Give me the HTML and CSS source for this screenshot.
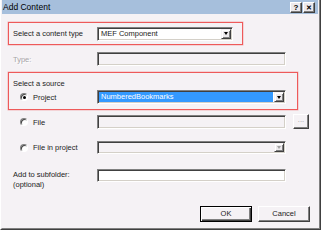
FILE: index.html
```html
<!DOCTYPE html>
<html>
<head>
<meta charset="utf-8">
<link rel="stylesheet" href="styles.css">
</head>
<body>
<div class="dialog">
  <div class="frame">
    <div class="titlebar">
      <span class="title">Add Content</span>
      <div class="tbtns">
        <span class="tbtn">?</span>
        <span class="tbtn x">&#x2715;</span>
      </div>
    </div>
    <div class="content">
      <div class="redbox box1">
        <div class="row">
          <span class="label">Select a content type</span>
          <div class="combo w136">
            <span class="ctext">MEF Component</span>
            <span class="dd"><span class="tri"></span></span>
          </div>
        </div>
      </div>

      <div class="row plain type-row">
        <span class="label disabled">Type:</span>
        <div class="field disabled w189"></div>
      </div>

      <div class="redbox box2">
        <div class="srclabel">Select a source</div>
        <div class="row proj-row">
          <span class="radio-wrap"><span class="radio on"></span><span>Project</span></span>
          <div class="combo w189">
            <span class="ctext sel">NumberedBookmarks</span>
            <span class="dd"><span class="tri"></span></span>
          </div>
        </div>
      </div>

      <div class="row plain file-row">
        <span class="radio-wrap"><span class="radio"></span><span>File</span></span>
        <div class="field disabled w189"></div>
        <span class="browse">...</span>
      </div>

      <div class="row plain fip-row">
        <span class="radio-wrap"><span class="radio"></span><span>File in project</span></span>
        <div class="combo disabled w189">
          <span class="ctext"></span>
          <span class="dd"><span class="tri grey"></span></span>
        </div>
      </div>

      <div class="row plain sub-row">
        <span class="label twoline">Add to subfolder:<br>(optional)</span>
        <div class="field w189"></div>
      </div>

      <div class="buttons">
        <span class="btn default">OK</span>
        <span class="btn">Cancel</span>
      </div>
    </div>
  </div>
</div>
</body>
</html>
```

FILE: styles.css
```css
html, body {
  margin: 0;
  padding: 0;
  background: #f5f2f5;
}
body {
  font-family: "Liberation Sans", Arial, sans-serif;
  font-size: 7.5px;
  color: #1c1c1c;
}
.dialog {
  width: 321px;
  height: 230px;
  box-sizing: border-box;
  border-left: 1px solid #ffffff;
  border-right: 1px solid #404040;
  border-bottom: 1px solid #404040;
  background: #f5f2f5;
}
.frame {
  height: 100%;
  box-sizing: border-box;
  border-left: 1px solid #f5f2f5;
  border-right: 1px solid #808080;
  border-bottom: 1px solid #808080;
  padding-right: 1px;
  padding-bottom: 1px;
  display: flex;
  flex-direction: column;
}
.titlebar {
  height: 14px;
  background: #a6bfdc;
  display: flex;
  align-items: center;
  justify-content: space-between;
  padding-left: 1px;
  padding-right: 3px;
}
.title {
  font-size: 8.5px;
  line-height: 14px;
  color: #000;
}
.tbtns {
  display: flex;
  gap: 1px;
}
.tbtn {
  width: 10px;
  height: 9px;
  background: #ece9ec;
  border-style: solid;
  border-width: 1px;
  border-color: #ffffff #404040 #404040 #ffffff;
  box-shadow: inset -1px -1px 0 #808080;
  font-size: 8px;
  font-weight: bold;
  line-height: 9px;
  text-align: center;
  color: #000;
}
.tbtn.x {
  font-size: 7px;
}
.content {
  padding-left: 6px;
  display: flex;
  flex-direction: column;
  align-items: flex-start;
}
.redbox {
  border: 1px solid #ee5a5a;
  box-shadow: 0 0 0 0.5px rgba(238, 90, 90, 0.4);
  box-sizing: border-box;
}
.box1 {
  margin-top: 8px;
  width: 235px;
  height: 23px;
  padding-left: 4px;
  display: flex;
  align-items: center;
}
.row {
  display: flex;
  align-items: center;
}
.row.plain {
  padding-left: 5px;
}
.label {
  width: 84px;
  flex: none;
}
.label.disabled {
  color: #a7a5a7;
  text-shadow: 1px 1px 0 #ffffff;
}
.combo, .field {
  height: 14px;
  box-sizing: border-box;
  background: #ffffff;
  border-style: solid;
  border-width: 1px;
  border-color: #808080 #ffffff #ffffff #808080;
  box-shadow: inset 1px 1px 0 #404040, inset -1px -1px 0 #d4d0c8;
  display: flex;
  align-items: stretch;
  padding: 1px;
}
.field.disabled, .combo.disabled {
  background: #f5f2f5;
}
.w136 { width: 136px; }
.w189 { width: 189px; }
.ctext {
  flex: 1;
  line-height: 10px;
  padding-left: 2px;
  white-space: nowrap;
  overflow: hidden;
}
.ctext.sel {
  background: #3399ff;
  color: #ffffff;
  margin-right: 1px;
}
.dd {
  width: 10px;
  box-sizing: border-box;
  background: #ece9ec;
  border-style: solid;
  border-width: 1px;
  border-color: #f5f2f5 #404040 #404040 #f5f2f5;
  box-shadow: inset 1px 1px 0 #ffffff, inset -1px -1px 0 #808080;
  display: flex;
  align-items: center;
  justify-content: center;
}
.tri {
  width: 0;
  height: 0;
  border-left: 2.5px solid transparent;
  border-right: 2.5px solid transparent;
  border-top: 3px solid #000000;
}
.tri.grey {
  border-top-color: #a0a0a0;
}
.type-row {
  margin-top: 7px;
}
.box2 {
  margin-top: 6px;
  width: 290px;
  height: 38px;
  padding-left: 4px;
  padding-top: 5px;
}
.srclabel {
  height: 11px;
  line-height: 11px;
}
.proj-row {
  margin-top: 1px;
}
.radio-wrap {
  width: 84px;
  flex: none;
  display: flex;
  align-items: center;
  padding-left: 7px;
  box-sizing: border-box;
}
.radio {
  width: 8px;
  height: 8px;
  box-sizing: border-box;
  border-radius: 50%;
  border: 1px solid;
  border-color: #808080 #ffffff #ffffff #808080;
  box-shadow: inset 1px 1px 0 #404040;
  background: #ffffff;
  margin-right: 5px;
  display: flex;
  align-items: center;
  justify-content: center;
}
.radio.on::after {
  content: "";
  width: 3px;
  height: 3px;
  border-radius: 50%;
  background: #000000;
}
.file-row {
  margin-top: 5px;
}
.browse {
  margin-left: 7px;
  width: 16px;
  height: 15px;
  box-sizing: border-box;
  background: #f5f2f5;
  border-style: solid;
  border-width: 1px;
  border-color: #ffffff #404040 #404040 #ffffff;
  box-shadow: inset -1px -1px 0 #808080;
  color: #a0a0a0;
  text-align: center;
  line-height: 9px;
  margin-top: -1px;
}
.fip-row {
  margin-top: 12px;
}
.fip-row .combo {
  height: 13px;
}
.sub-row {
  margin-top: 15px;
  align-items: flex-start;
}
.sub-row .field {
  height: 13px;
}
.twoline {
  line-height: 10px;
  margin-top: 1px;
}
.buttons {
  margin-top: 16px;
  align-self: stretch;
  display: flex;
  justify-content: flex-end;
  gap: 6px;
  padding-right: 8px;
}
.btn {
  width: 52px;
  height: 16px;
  box-sizing: border-box;
  background: #f5f2f5;
  border-style: solid;
  border-width: 1px;
  border-color: #ffffff #404040 #404040 #ffffff;
  box-shadow: inset -1px -1px 0 #808080;
  text-align: center;
  line-height: 13px;
}
.btn.default {
  border-color: #000000;
  box-shadow: inset 1px 1px 0 #ffffff, inset -1px -1px 0 #404040, inset -2px -2px 0 #808080;
}
```
